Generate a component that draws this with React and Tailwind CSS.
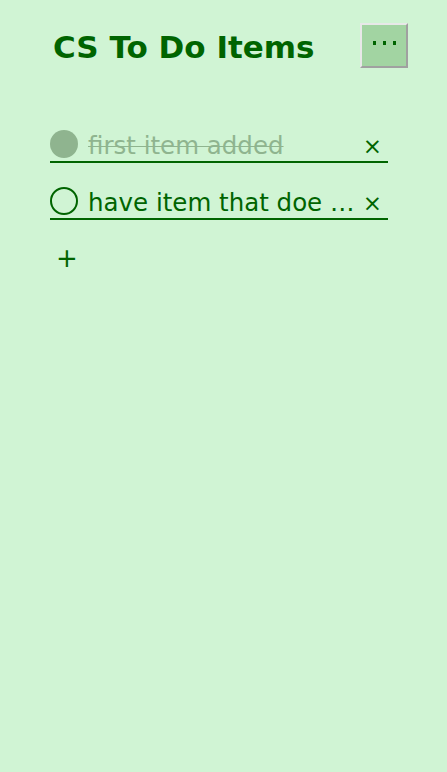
import React, { useState } from "react";

const font = { fontFamily: '"Century Gothic", "DejaVu Sans", sans-serif' };

const initialItems = [
  { id: 1, text: "first item added", done: true },
  { id: 2, text: "have item that doe …", done: false },
];

const TodoRow = ({ item, onToggle, onDelete }) => (
  <div className="flex h-[57px] items-end">
    <div className="flex h-[40px] w-full items-center border-b-2 border-[#006400] pt-[4px]">
      <button
        type="button"
        onClick={() => onToggle(item.id)}
        className={
          item.done
            ? "h-[28px] w-[28px] shrink-0 rounded-full bg-[#8fb48f]"
            : "h-[28px] w-[28px] shrink-0 rounded-full border-2 border-[#006400]"
        }
      />
      <span
        className={
          item.done
            ? "ml-[10px] flex-1 whitespace-nowrap pt-[4px] text-[24.5px] leading-none text-[#8fb48f] line-through decoration-1"
            : "ml-[10px] flex-1 whitespace-nowrap pt-[4px] text-[24.5px] leading-none text-[#006400]"
        }
      >
        {item.text}
      </span>
      <button
        type="button"
        onClick={() => onDelete(item.id)}
        className="mr-[6px] pt-[4px] text-[23px] leading-none text-[#006400]"
      >
        ×
      </button>
    </div>
  </div>
);

const App = () => {
  const [items, setItems] = useState(initialItems);

  const toggle = (id) =>
    setItems(items.map((i) => (i.id === id ? { ...i, done: !i.done } : i)));
  const remove = (id) => setItems(items.filter((i) => i.id !== id));

  return (
    <div className="min-h-[772px] w-full bg-[#d0f4d4]" style={font}>
      <div className="flex items-start justify-between pl-[53px] pr-[39px] pt-[23px]">
        <h1 className="mt-[4px] text-[31px] font-bold leading-[40px] text-[#006400]">
          CS To Do Items
        </h1>
        <button
          type="button"
          className="flex h-[45px] w-[48px] items-center justify-center gap-[7px] border-2 border-b-[#a0a0a0] border-l-[#e8e8e8] border-r-[#a0a0a0] border-t-[#e8e8e8] bg-[#a2d4a2] pb-[5px]"
        >
          <span className="h-[4px] w-[3px] bg-[#006400]" />
          <span className="h-[4px] w-[3px] bg-[#006400]" />
          <span className="h-[4px] w-[3px] bg-[#006400]" />
        </button>
      </div>

      <div className="mt-[38px] pl-[50px] pr-[59px]">
        {items.map((item) => (
          <TodoRow key={item.id} item={item} onToggle={toggle} onDelete={remove} />
        ))}
        <button
          type="button"
          className="ml-[6px] mt-[25px] text-[26px] leading-none text-[#006400]"
        >
          +
        </button>
      </div>
    </div>
  );
};

export default App;
